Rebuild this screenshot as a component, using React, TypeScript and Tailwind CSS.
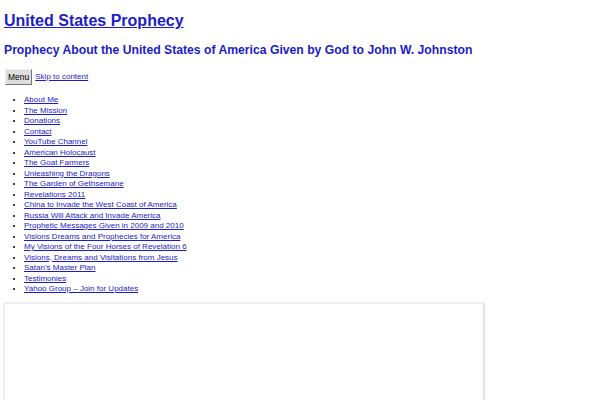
const links = [
  "About Me",
  "The Mission",
  "Donations",
  "Contact",
  "YouTube Channel",
  "American Holocaust",
  "The Goat Farmers",
  "Unleashing the Dragons",
  "The Garden of Gethsemane",
  "Revelations 2011",
  "China to Invade the West Coast of America",
  "Russia Will Attack and Invade America",
  "Prophetic Messages Given in 2009 and 2010",
  "Visions Dreams and Prophecies for America",
  "My Visions of the Four Horses of Revelation 6",
  "Visions, Dreams and Visitations from Jesus",
  "Satan’s Master Plan",
  "Testimonies",
  "Yahoo Group – Join for Updates",
];

export default function App() {
  return (
    <div className="w-[600px] h-[400px] overflow-hidden bg-white font-['Liberation_Sans',Arial,sans-serif] text-black">
      <div className="px-[4px] pt-[10px]">
        {/* Site title */}
        <h1 className="text-[16px] leading-[22px] font-bold">
          <a href="#" className="text-[#1c1cc8] underline">
            United States Prophecy
          </a>
        </h1>
        <h2 className="mt-[9px] text-[12.2px] leading-[18px] font-bold text-[#1c1cc8]">
          Prophecy About the United States of America Given by God to John W. Johnston
        </h2>

        {/* Nav toggle */}
        <div className="mt-[10px] flex items-center gap-[3px] pl-[1px]">
          <button className="h-[16px] px-[2px] text-[8.5px] leading-none bg-[#dddddd] border border-t-[#f0f0f0] border-l-[#f0f0f0] border-r-[#767676] border-b-[#767676]">
            Menu
          </button>
          <a href="#" className="text-[8px] text-[#1c1cc8] underline">
            Skip to content
          </a>
        </div>

        <ul className="mt-[10px] pl-[20px] list-disc text-[8px] leading-[10.5px]">
          {links.map((l) => (
            <li key={l}>
              <a href="#" className="text-[#1c1cc8] underline">
                {l}
              </a>
            </li>
          ))}
        </ul>

        {/* Embedded frame */}
        <div className="mt-[7px] -ml-[1px] w-[482px] h-[120px] border-2 border-[#eeeeee] border-r-[#e4e4e4]" />
      </div>
    </div>
  );
}
